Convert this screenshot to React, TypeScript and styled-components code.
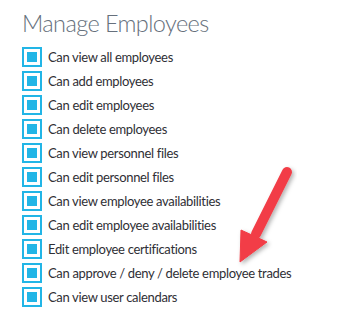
import * as React from 'react';
import styled, { createGlobalStyle } from 'styled-components';

const GlobalStyle = createGlobalStyle`
  html, body {
    margin: 0;
    padding: 0;
    background: #ffffff;
  }
  body {
    font-family: 'Lato', 'Open Sans', sans-serif;
  }
`;

const Page = styled.div`
  position: relative;
  width: 361px;
  height: 309px;
  padding: 7px 0 0 22px;
  box-sizing: border-box;
  overflow: hidden;
`;

const Title = styled.h1`
  margin: 0 0 8px 0;
  font-family: 'Lato', sans-serif;
  font-weight: 300;
  font-size: 23.5px;
  line-height: 32px;
  letter-spacing: -0.6px;
  color: #66707c;
`;

const List = styled.ul`
  list-style: none;
  margin: 0;
  padding: 0;
  display: flex;
  flex-direction: column;
  gap: 4px;
`;

const Row = styled.li`
  display: flex;
  align-items: center;
  gap: 6px;
  height: 20px;
`;

const Box = styled.span<{ checked: boolean }>`
  width: 20px;
  height: 20px;
  box-sizing: border-box;
  border: 2px solid #22b5e6;
  display: flex;
  align-items: center;
  justify-content: center;
  flex-shrink: 0;
  &::after {
    content: '';
    width: 10px;
    height: 10px;
    background: ${p => (p.checked ? '#22b5e6' : 'transparent')};
  }
`;

const Label = styled.span`
  font-family: 'Lato', sans-serif;
  font-size: 13px;
  letter-spacing: -0.33px;
  color: #2f2f35;
`;

const Arrow = styled.svg`
  position: absolute;
  left: 0;
  top: 0;
  pointer-events: none;
`;

const permissions = [
  'Can view all employees',
  'Can add employees',
  'Can edit employees',
  'Can delete employees',
  'Can view personnel files',
  'Can edit personnel files',
  'Can view employee availabilities',
  'Can edit employee availabilities',
  'Edit employee certifications',
  'Can approve / deny / delete employee trades',
  'Can view user calendars',
];

export default function App() {
  return (
    <Page>
      <GlobalStyle />
      <Title>Manage Employees</Title>
      <List>
        {permissions.map((p, i) => (
          <Row key={i}>
            <Box checked />
            <Label>{p}</Label>
          </Row>
        ))}
      </List>
      <Arrow width="361" height="309" viewBox="0 0 361 309">
        <defs>
          <filter id="shadow" x="-20%" y="-20%" width="140%" height="140%">
            <feDropShadow dx="2" dy="2" stdDeviation="2" floodColor="#000" floodOpacity="0.3" />
          </filter>
        </defs>
        <g filter="url(#shadow)" fill="#f23d46" stroke="#f23d46">
          <line x1="287" y1="172" x2="256" y2="234" strokeWidth="10" strokeLinecap="round" />
          <polygon points="240,262 241,230 267,242" strokeWidth="1" strokeLinejoin="round" />
        </g>
      </Arrow>
    </Page>
  );
}
